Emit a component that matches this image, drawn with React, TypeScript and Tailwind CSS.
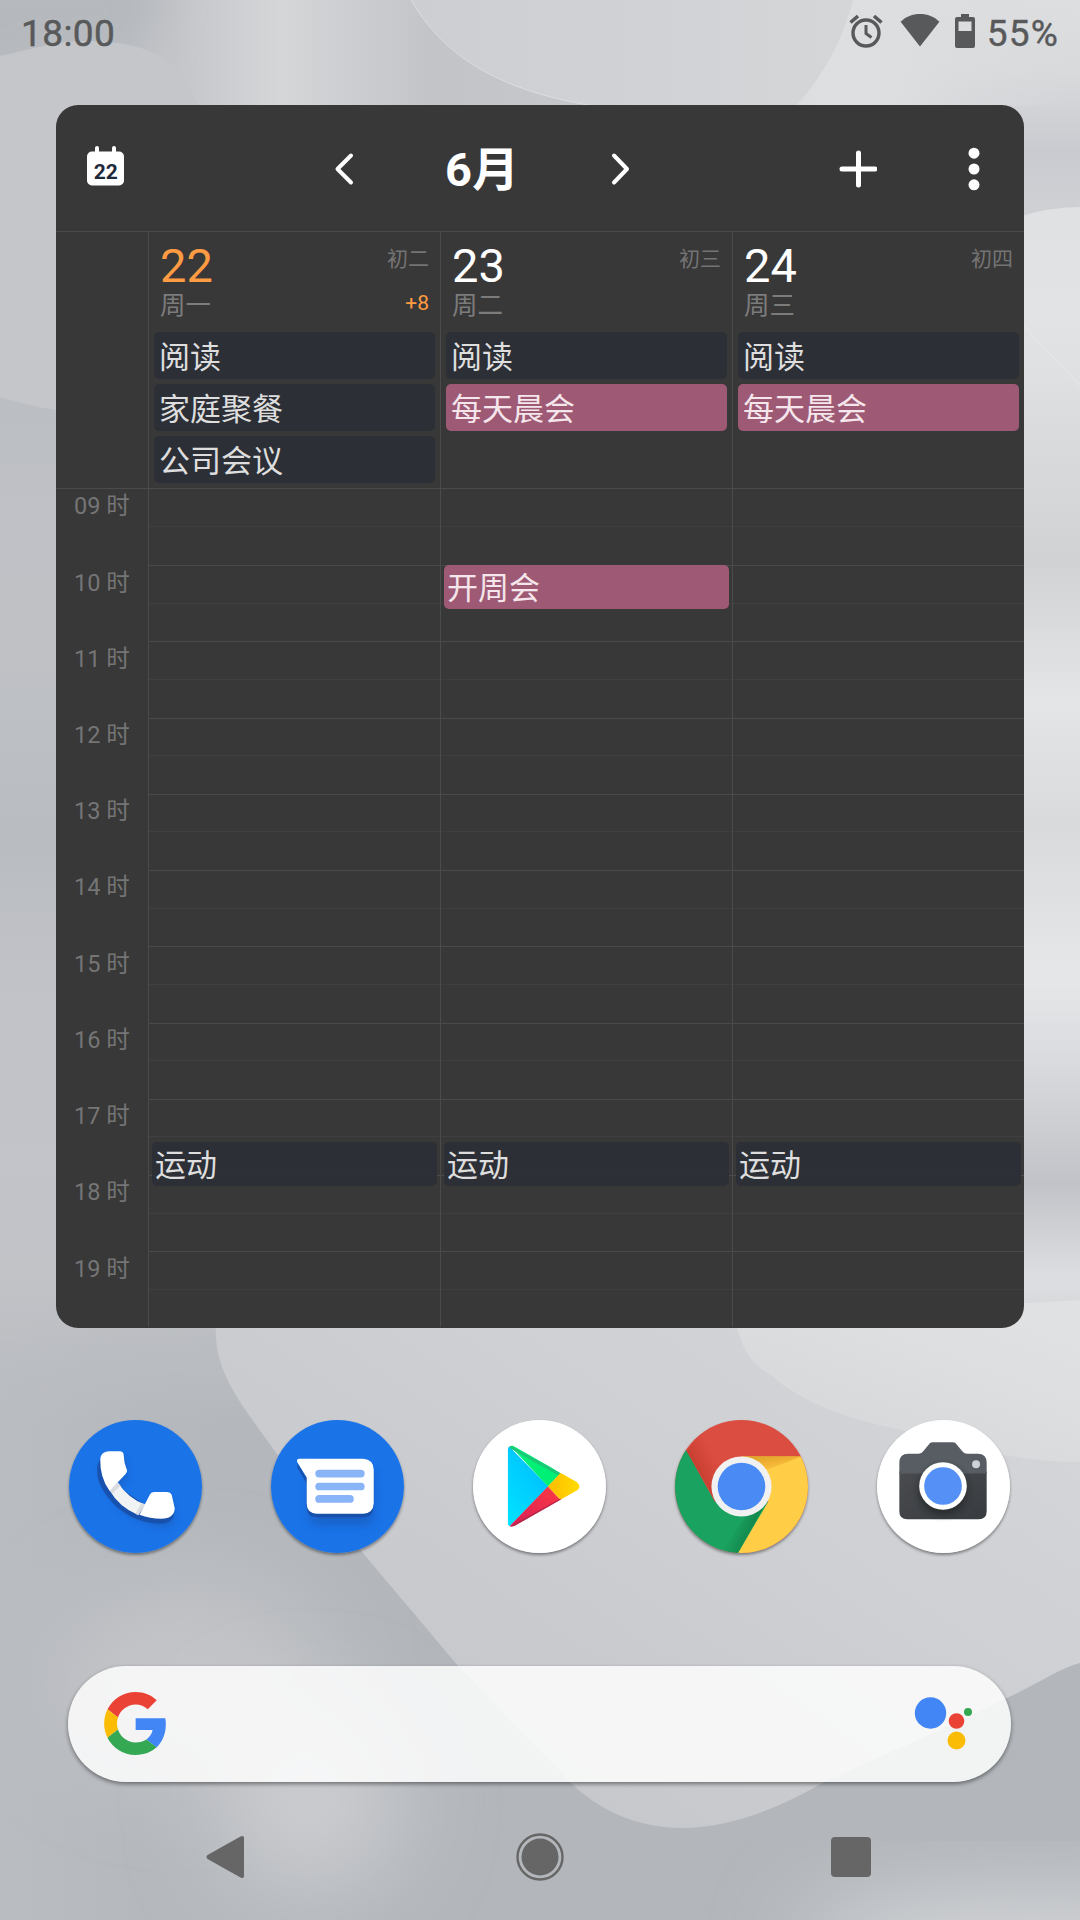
import React from "react";

type AllDayEvent = { title: string; tone: "navy" | "rose" };
type TimedEvent = { title: string; tone: "navy" | "rose"; start: number };
type Day = {
  date: string;
  weekday: string;
  lunar: string;
  extra?: string;
  today?: boolean;
  allDay: AllDayEvent[];
  timed: TimedEvent[];
};

const HOUR_HEIGHT = 76.22;
const FIRST_HOUR = 9;

const days: Day[] = [
  {
    date: "22",
    weekday: "周一",
    lunar: "初二",
    extra: "+8",
    today: true,
    allDay: [
      { title: "阅读", tone: "navy" },
      { title: "家庭聚餐", tone: "navy" },
      { title: "公司会议", tone: "navy" },
    ],
    timed: [{ title: "运动", tone: "navy", start: 17.57 }],
  },
  {
    date: "23",
    weekday: "周二",
    lunar: "初三",
    allDay: [
      { title: "阅读", tone: "navy" },
      { title: "每天晨会", tone: "rose" },
    ],
    timed: [
      { title: "开周会", tone: "rose", start: 10 },
      { title: "运动", tone: "navy", start: 17.57 },
    ],
  },
  {
    date: "24",
    weekday: "周三",
    lunar: "初四",
    allDay: [
      { title: "阅读", tone: "navy" },
      { title: "每天晨会", tone: "rose" },
    ],
    timed: [{ title: "运动", tone: "navy", start: 17.57 }],
  },
];

const hours = ["09", "10", "11", "12", "13", "14", "15", "16", "17", "18", "19"];

const toneClass = {
  navy: "bg-[#2b2e36]/95 text-[#dedede]",
  rose: "bg-[#a05a76]/98 text-[#f5e6ec]",
};

function Wallpaper() {
  return (
    <svg className="absolute inset-0 h-full w-full" viewBox="0 0 1080 1920" preserveAspectRatio="none" aria-hidden="true">
      <defs>
        <linearGradient id="left" gradientUnits="userSpaceOnUse" x1="0" y1="0" x2="0" y2="1450">
          <stop offset="0" stopColor="#c3c4c8" />
          <stop offset="0.28" stopColor="#bbbec3" />
          <stop offset="0.36" stopColor="#bfc1c6" />
          <stop offset="0.44" stopColor="#bfc1c5" />
          <stop offset="0.58" stopColor="#b9bdc2" />
          <stop offset="0.68" stopColor="#c1c2c7" />
          <stop offset="0.8" stopColor="#c3c4c9" />
          <stop offset="0.93" stopColor="#bfc1c5" />
          <stop offset="1" stopColor="#bcbfc3" />
        </linearGradient>
        <linearGradient id="right" gradientUnits="userSpaceOnUse" x1="0" y1="0" x2="0" y2="1400">
          <stop offset="0" stopColor="#dddee0" />
          <stop offset="0.05" stopColor="#d9dadc" />
          <stop offset="0.107" stopColor="#cacbd0" />
          <stop offset="0.15" stopColor="#cfd0d4" />
          <stop offset="0.26" stopColor="#dfe0e2" />
          <stop offset="0.4" stopColor="#d1d2d4" />
          <stop offset="0.5" stopColor="#e4e5e7" />
          <stop offset="0.59" stopColor="#d9dadc" />
          <stop offset="0.7" stopColor="#e6e7e9" />
          <stop offset="0.76" stopColor="#d9dadd" />
          <stop offset="0.845" stopColor="#c2c3c8" />
          <stop offset="0.91" stopColor="#dcdde0" />
          <stop offset="1" stopColor="#dcdddf" />
        </linearGradient>
        <linearGradient id="top" gradientUnits="userSpaceOnUse" x1="0" y1="0" x2="1080" y2="0">
          <stop offset="0" stopColor="#c3c4c9" />
          <stop offset="0.16" stopColor="#c4c5c9" />
          <stop offset="0.26" stopColor="#d5d6d8" />
          <stop offset="0.4" stopColor="#c3c4c8" />
          <stop offset="0.6" stopColor="#c8c9cd" />
          <stop offset="0.76" stopColor="#dedfe1" />
          <stop offset="0.82" stopColor="#dddee0" />
          <stop offset="1" stopColor="#dadbdd" stopOpacity="0" />
        </linearGradient>
        <linearGradient id="topShape" x1="0" y1="0" x2="1" y2="0">
          <stop offset="0" stopColor="#cdced2" />
          <stop offset="1" stopColor="#d5d6d8" />
        </linearGradient>
        <linearGradient id="rightHill" gradientUnits="userSpaceOnUse" x1="0" y1="205" x2="0" y2="400">
          <stop offset="0" stopColor="#dfe1e3" />
          <stop offset="0.6" stopColor="#e2e3e5" />
          <stop offset="1" stopColor="#e2e3e5" stopOpacity="0" />
        </linearGradient>
        <linearGradient id="bottom" gradientUnits="userSpaceOnUse" x1="0" y1="0" x2="400" y2="0">
          <stop offset="0" stopColor="#b9bcc1" />
          <stop offset="0.35" stopColor="#b5b9bd" />
          <stop offset="1" stopColor="#b3b7bb" />
        </linearGradient>
        <linearGradient id="fade" gradientUnits="userSpaceOnUse" x1="0" y1="1290" x2="0" y2="1420">
          <stop offset="0" stopColor="#000" />
          <stop offset="1" stopColor="#fff" />
        </linearGradient>
        <mask id="fadeMask" maskUnits="userSpaceOnUse" x="0" y="1200" width="1080" height="720">
          <rect y="1200" width="1080" height="720" fill="url(#fade)" />
        </mask>
        <linearGradient id="hill" gradientUnits="userSpaceOnUse" x1="900" y1="1330" x2="560" y2="1830">
          <stop offset="0" stopColor="#d4d5d8" />
          <stop offset="0.5" stopColor="#cdced2" />
          <stop offset="1" stopColor="#c6c7cb" />
        </linearGradient>
        <linearGradient id="dome" gradientUnits="userSpaceOnUse" x1="960" y1="1300" x2="900" y2="1460">
          <stop offset="0" stopColor="#e0e1e3" />
          <stop offset="1" stopColor="#d7d8da" />
        </linearGradient>
        <filter id="soft" x="-80%" y="-80%" width="260%" height="260%">
          <feGaussianBlur stdDeviation="45" />
        </filter>
        <filter id="softSmall" x="-50%" y="-50%" width="200%" height="200%">
          <feGaussianBlur stdDeviation="20" />
        </filter>
      </defs>
      <rect width="540" height="1450" fill="url(#left)" />
      <rect x="540" width="540" height="1450" fill="url(#right)" />
      <rect width="1080" height="106" fill="url(#top)" />
      <path d="M-60 -40H170L150 50L110 70Q60 60 36 70Q18 80 -60 116Z" fill="#b5b9be" filter="url(#softSmall)" />
      <path d="M0 56C30 50 50 42 80 41C150 40 185 60 200 112V420C120 420 60 415 0 397Z" fill="#c5c6ca" />
      <path d="M411 0C435 40 480 95 625 110H792C830 70 845 30 853 0Z" fill="url(#topShape)" />
      <path d="M411 0C435 40 480 95 625 110" fill="none" stroke="#dcdde0" strokeWidth="1" />
      <path d="M1000 224Q1040 207 1080 207V400H1000Z" fill="url(#rightHill)" />
      <path d="M1024 326Q1050 355 1080 385" fill="none" stroke="#e9eaec" strokeWidth="1" />
      <rect y="1290" width="1080" height="630" fill="url(#bottom)" mask="url(#fadeMask)" />
      <ellipse cx="190" cy="1680" rx="130" ry="90" fill="#c4c5c9" filter="url(#soft)" />
      <ellipse cx="310" cy="1800" rx="90" ry="90" fill="#cbccd0" filter="url(#soft)" />
      <ellipse cx="1030" cy="1945" rx="230" ry="40" fill="#dcdde0" filter="url(#soft)" />
      <path
        d="M216 1320C213 1370 235 1396 277 1454C300 1482 330 1512 363 1553C398 1595 425 1626 458 1666L569 1781C600 1812 640 1828 682 1828C730 1828 780 1808 826 1781C890 1752 950 1727 1005 1699C1045 1680 1060 1668 1080 1663V1320Z"
        fill="url(#hill)"
      />
      <path d="M735 1320C742 1350 752 1364 771 1375C800 1402 850 1420 902 1430C950 1444 1020 1463 1080 1462V1300Z" fill="url(#dome)" />
    </svg>
  );
}

function StatusBar() {
  return (
    <header className="flex h-[105px] items-start justify-between pl-[21px] pr-[21px] pt-3 text-[#58595a]">
      <span className="text-[37px] leading-[43px] tracking-[0.4px] [-webkit-text-stroke:0.5px_currentColor]">18:00</span>
      <div className="flex items-center">
        <svg className="mb-[6px] h-[36px] w-[36px]" viewBox="0 0 36 36" fill="none" stroke="currentColor" strokeWidth="3.4">
          <circle cx="18" cy="20" r="13" />
          <path d="M18 12v8.500l5.500 4" strokeWidth="3" />
          <path d="M2.500 9.500L10 3M33.500 9.500L26 3" strokeWidth="3.6" />
        </svg>
        <svg className="mb-[7px] ml-[16px] h-[34px] w-[40px]" viewBox="0 0 40 34" fill="currentColor">
          <path d="M20 33.500L.6 8.800C6 3.500 12.500 1 20 1S34 3.500 39.400 8.800Z" />
        </svg>
        <svg className="mb-[6px] ml-[15px] h-[36px] w-[20px]" viewBox="0 0 20 36">
          <path fill="currentColor" fillRule="evenodd" d="M6 1h8v3h4q2 0 2 2v27q0 2-2 2H2q-2 0-2-2V6q0-2 2-2h4zM3.500 8.500v9.500h13V8.500z" />
        </svg>
        <span className="ml-[12px] text-[37px] leading-[43px] tracking-[1.2px] [-webkit-text-stroke:0.4px_currentColor]">55%</span>
      </div>
    </header>
  );
}

function WidgetHeader() {
  return (
    <div className="flex h-[127px] items-center border-b border-[#4b4b4b] text-white">
      <svg className="mb-[4px] ml-[31px] h-[40px] w-[37px]" viewBox="0 0 37 40">
        <path d="M10 2v8M27 2v8" stroke="#fff" strokeWidth="4" strokeLinecap="round" />
        <rect y="5.500" width="37" height="34" rx="5" fill="#fff" />
        <text x="18.700" y="32.500" textAnchor="middle" fontFamily="Roboto" fontWeight="700" fontSize="21" fill="#1e293b">
          22
        </text>
      </svg>
      <svg className="ml-[210px] mt-px h-[34px] w-[20px]" viewBox="0 0 20 34" fill="none" stroke="#fff" strokeWidth="4" strokeLinecap="round" strokeLinejoin="round">
        <path d="M17 3.500L3.500 17L17 30.500" />
      </svg>
      <h1 className="ml-[91px] w-[74px] whitespace-nowrap pt-[2px] text-[47px] font-bold leading-none">6月</h1>
      <svg className="ml-[92px] mt-px h-[34px] w-[20px]" viewBox="0 0 20 34" fill="none" stroke="#fff" strokeWidth="4" strokeLinecap="round" strokeLinejoin="round">
        <path d="M3 3.500L16 17L3 30.500" />
      </svg>
      <svg className="ml-[208px] mt-px h-[38px] w-[38px]" viewBox="0 0 38 38" stroke="#fff" strokeWidth="5" strokeLinecap="round">
        <path d="M19.500 3v32M3 19h33" />
      </svg>
      <svg className="ml-[91px] mt-px h-[44px] w-[12px]" viewBox="0 0 12 44" fill="#fff">
        <circle cx="6" cy="6.200" r="5.500" />
        <circle cx="6" cy="22" r="5.500" />
        <circle cx="6" cy="37.800" r="5.500" />
      </svg>
    </div>
  );
}

function DayHead({ day }: { day: Day }) {
  return (
    <div className="w-[292px] border-l border-[#4b4b4b] px-[5px]">
      <div className="flex h-[100px] justify-between px-[6px]">
        <div className="pt-[11px]">
          <div className={day.today ? "text-[47px] leading-[46px] text-[#ff9b42]" : "text-[47px] leading-[46px] text-white"}>{day.date}</div>
          <div className="text-[25.500px] leading-[32px] text-[#7c7c7c]">{day.weekday}</div>
        </div>
        <div className="flex flex-col items-end pt-[14px]">
          <div className="text-[21px] leading-[26px] text-[#747474]">{day.lunar}</div>
          {day.extra && <div className="mt-[18px] text-[21px] leading-[26px] text-[#ff9b42]">{day.extra}</div>}
        </div>
      </div>
      <div className="flex flex-col gap-[5px]">
        {day.allDay.map((event) => (
          <div key={event.title} className={`flex h-[47px] items-center rounded-[5px] pl-[5px] pt-[3px] text-[31px] leading-none ${toneClass[event.tone]}`}>
            {event.title}
          </div>
        ))}
      </div>
    </div>
  );
}

function DayTrack({ day }: { day: Day }) {
  return (
    <div className="relative w-[292px] border-l border-[#4b4b4b]">
      {hours.map((hour, i) => (
        <div key={hour} className={i === 0 ? "h-[76.22px]" : "h-[76.22px] border-t border-[#4a4a4a]"}>
          <div className="h-1/2 border-b border-[#3f3f3f]" />
        </div>
      ))}
      {day.timed.map((event) => (
        <div
          key={event.title}
          className={`absolute left-[3px] flex h-[44px] w-[285px] items-center rounded-[5px] pl-[3px] pt-[2px] text-[31px] leading-none ${toneClass[event.tone]}`}
          style={{ top: (event.start - FIRST_HOUR) * HOUR_HEIGHT }}
        >
          {event.title}
        </div>
      ))}
    </div>
  );
}

function CalendarWidget() {
  return (
    <section className="mx-[56px] h-[1223px] overflow-hidden rounded-[22px] bg-[#383838]">
      <WidgetHeader />
      <div className="flex h-[257px] border-b border-[#4b4b4b]">
        <div className="w-[92px]" />
        {days.map((day) => (
          <DayHead key={day.date} day={day} />
        ))}
      </div>
      <div className="flex">
        <div className="w-[92px]">
          {hours.map((hour) => (
            <div key={hour} className="h-[76.22px] whitespace-nowrap pl-[18px] pt-[2.4px] text-[23.500px] leading-[30px] text-[#757575]">
              {hour} 时
            </div>
          ))}
        </div>
        {days.map((day) => (
          <DayTrack key={day.date} day={day} />
        ))}
      </div>
    </section>
  );
}

function PhoneIcon() {
  return (
    <svg className="h-full w-full" viewBox="0 0 134 134">
      <defs>
        <filter id="phoneShade" x="-30%" y="-30%" width="160%" height="160%">
          <feGaussianBlur stdDeviation="4" />
        </filter>
      </defs>
      <circle cx="67" cy="67" r="67" fill="#1b73e8" />
      <path d="M32 44C32 82 66 108 98 108Q107 107 107 96L104 80H86L76 90Q60 84 50 70L60 56L56 36H42Q34 36 32 44Z" fill="#1657b4" opacity="0.5" filter="url(#phoneShade)" />
      <path d="M31 40Q26 48 30 62C40 86 62 104 94 104.500Q106 103 106 92L80 88L45 64Z" fill="#174ea6" opacity="0.85" />
      <path d="M49 63Q60 79 76 85L69 95.500Q50 87 41 71Z" fill="#f1f2f4" />
      <path d="M49 63L52 66L44 74L41 71ZM73 84L77 85L70 96L67 94.500Z" fill="#dadce0" />
      <path d="M31.500 39.500Q32 32 40 31.500H51Q54.500 31.500 55 34.500L56 43L58.500 51Q58.500 53 57 54.500L41 71.500Q31 58 31.500 39.500Z" fill="#fff" />
      <path d="M71 95.500L81.500 75Q83 72.500 86 72.500H98Q102.500 72.500 103.500 75.500L106.500 89Q106 99.500 93 99.500Q82 99.500 71 95.500Z" fill="#fff" />
    </svg>
  );
}

function MessagesIcon() {
  return (
    <svg className="h-full w-full" viewBox="0 0 134 134">
      <defs>
        <filter id="msgShade" x="-30%" y="-30%" width="160%" height="160%">
          <feGaussianBlur stdDeviation="5" />
        </filter>
      </defs>
      <circle cx="67" cy="67" r="67" fill="#1b73e8" />
      <rect x="38" y="48" width="66" height="58" rx="10" fill="#1657b4" opacity="0.6" filter="url(#msgShade)" />
      <path d="M26.500 43V48L36 64V88Q36 98 46 98H93Q103 98 103 88V82H50Z" fill="#174ea6" opacity="0.85" />
      <path d="M28 39H93Q103.500 40 103.500 50V84Q103 94 93 94.500H46Q36 94 36 84V58L26.500 42.500Q25.500 39.500 28 39Z" fill="#fff" />
      <path d="M48.500 54H90.500M48.500 67H90.500M48.500 79.500H79.500" stroke="#8ab4f8" strokeWidth="7.800" strokeLinecap="round" />
    </svg>
  );
}

function PlayIcon() {
  return (
    <svg className="h-full w-full" viewBox="0 0 134 134">
      <defs>
        <linearGradient id="playBlue" x1="1" y1="0" x2="0.300" y2="1">
          <stop offset="0" stopColor="#00b4ff" />
          <stop offset="1" stopColor="#00e3ff" />
        </linearGradient>
        <linearGradient id="playYellow" x1="1" y1="0" x2="0" y2="0">
          <stop offset="0" stopColor="#ffe000" />
          <stop offset="1" stopColor="#ffbd00" />
        </linearGradient>
        <linearGradient id="playRed" x1="1" y1="0" x2="0" y2="1">
          <stop offset="0" stopColor="#ff3a44" />
          <stop offset="1" stopColor="#d01a58" />
        </linearGradient>
        <clipPath id="playClip">
          <path d="M35 30Q35.500 25.500 40 26L43 27.500L104.500 62.500Q110 67 104.500 71L42 106.500Q36 109 35 104Z" />
        </clipPath>
      </defs>
      <circle cx="67" cy="67" r="67" fill="#fff" />
      <g clipPath="url(#playClip)">
        <path d="M30 20V114L76 67Z" fill="url(#playBlue)" />
        <path d="M32 20L75.500 67L88 54L44 22Z" fill="#00f076" />
        <path d="M35 24L89 54L87 56.500L38 29Z" fill="#1cc878" />
        <path d="M75.500 67L88 53.500L112 60V74L88 80.500Z" fill="url(#playYellow)" />
        <path d="M32 112L75.500 67L88 80.500L44 112Z" fill="url(#playRed)" />
        <path d="M36 108L88 79L89 81.500L40 110Z" fill="#b5294a" />
      </g>
    </svg>
  );
}

function ChromeIcon() {
  return (
    <svg className="h-full w-full" viewBox="0 0 134 134">
      <defs>
        <clipPath id="chromeClip">
          <circle cx="67" cy="67" r="67" />
        </clipPath>
        <linearGradient id="redShade" gradientUnits="userSpaceOnUse" x1="18" y1="48" x2="40" y2="36">
          <stop offset="0" stopColor="#a52714" stopOpacity="0.400" />
          <stop offset="1" stopColor="#a52714" stopOpacity="0" />
        </linearGradient>
        <linearGradient id="greenShade" gradientUnits="userSpaceOnUse" x1="78" y1="112" x2="60" y2="104">
          <stop offset="0" stopColor="#055524" stopOpacity="0.350" />
          <stop offset="1" stopColor="#055524" stopOpacity="0" />
        </linearGradient>
        <linearGradient id="yellowShade" gradientUnits="userSpaceOnUse" x1="100" y1="36" x2="103" y2="54">
          <stop offset="0" stopColor="#bf7a10" stopOpacity="0.450" />
          <stop offset="1" stopColor="#ea6100" stopOpacity="0" />
        </linearGradient>
      </defs>
      <g clipPath="url(#chromeClip)">
        <rect width="134" height="134" fill="#dc4d41" />
        <path d="M11.500 31L40 82L94 82L63.500 140H-10V20Z" fill="#1aa260" />
        <path d="M67 36.500H140V140H62L63.500 134L94 82Z" fill="#ffcd46" />
        <path d="M11.500 31L40 80L45 50L30 8Z" fill="url(#redShade)" />
        <path d="M63.500 134L90 86L72 96L46 134Z" fill="url(#greenShade)" />
        <path d="M67 36.500H128L88 52Z" fill="url(#yellowShade)" />
        <circle cx="67" cy="67" r="30.300" fill="#f1f1f1" />
        <circle cx="67" cy="67" r="24" fill="#4a8af4" />
      </g>
    </svg>
  );
}

function CameraIcon() {
  return (
    <svg className="h-full w-full" viewBox="0 0 134 134">
      <defs>
        <linearGradient id="camBody" x1="0" y1="0" x2="1" y2="1">
          <stop offset="0" stopColor="#494b4f" />
          <stop offset="1" stopColor="#383b3f" />
        </linearGradient>
        <filter id="lensShade" x="-30%" y="-30%" width="160%" height="160%">
          <feGaussianBlur stdDeviation="3" />
        </filter>
      </defs>
      <circle cx="67" cy="67" r="67" fill="#fff" />
      <path d="M22.500 52H110.500V92Q110.500 100 102.500 100H30.500Q22.500 100 22.500 92Z" fill="url(#camBody)" />
      <path d="M22.500 54V43Q22.500 34 31.500 34H42Q45 34 47 31L52 25Q53.500 22.500 56 22.500H76.500Q79 22.500 80.500 25L85.500 31Q87.500 34 90.500 34H101.500Q110.500 34 110.500 43V54Z" fill="#585d63" />
      <circle cx="66.500" cy="71" r="25" fill="#1f2124" opacity="0.600" filter="url(#lensShade)" />
      <circle cx="66.500" cy="66.500" r="24" fill="#fff" />
      <circle cx="66.500" cy="66.500" r="19" fill="#5490f5" />
      <circle cx="99.800" cy="44.500" r="4" fill="#cfd1d4" />
    </svg>
  );
}

function Dock() {
  const apps = [
    { name: "phone", icon: <PhoneIcon /> },
    { name: "messages", icon: <MessagesIcon /> },
    { name: "play", icon: <PlayIcon /> },
    { name: "chrome", icon: <ChromeIcon /> },
    { name: "camera", icon: <CameraIcon /> },
  ];
  return (
    <nav className="mt-[92px] flex justify-between pl-[69px] pr-[70px]">
      {apps.map((app) => (
        <div key={app.name} className="h-[133px] w-[133px] rounded-full shadow-[0_2px_3px_rgba(0,0,0,0.4)]">
          {app.icon}
        </div>
      ))}
    </nav>
  );
}

function SearchBar() {
  return (
    <div className="ml-[68px] mr-[69px] mt-[113px] flex h-[116px] items-center justify-between rounded-full bg-white/83 pl-[36px] pr-[39px] shadow-[0_2px_4px_rgba(0,0,0,0.45)]">
      <svg className="mb-px h-[63px] w-[62px]" viewBox="0 0 47 48">
        <path fill="#EA4335" d="M24 9.500c3.540 0 6.710 1.220 9.210 3.600l6.850-6.850C35.900 2.380 30.470 0 24 0 14.620 0 6.510 5.380 2.560 13.220l7.980 6.190C12.430 13.720 17.740 9.500 24 9.500z" />
        <path fill="#4285F4" d="M46.980 24.550c0-1.570-.15-3.090-.38-4.550H24v9.020h12.940c-.58 2.960-2.260 5.480-4.780 7.180l7.730 6c4.510-4.180 7.090-10.360 7.090-17.650z" />
        <path fill="#FBBC05" d="M10.530 28.590c-.48-1.450-.76-2.990-.76-4.590s.27-3.140.76-4.590l-7.980-6.190C.92 16.460 0 20.120 0 24c0 3.880.92 7.540 2.560 10.780l7.970-6.190z" />
        <path fill="#34A853" d="M24 48c6.480 0 11.930-2.130 15.890-5.810l-7.730-6c-2.150 1.450-4.920 2.300-8.160 2.300-6.260 0-11.570-4.220-13.470-9.910l-7.980 6.190C6.510 42.620 14.620 48 24 48z" />
      </svg>
      <svg className="mb-[1px] h-[58px] w-[58px]" viewBox="0 0 58 58">
        <circle cx="16.500" cy="18" r="15.700" fill="#4285f4" />
        <circle cx="42.500" cy="26" r="7.800" fill="#ea4335" />
        <circle cx="42.500" cy="45.500" r="9" fill="#fbbc05" />
        <circle cx="54" cy="17" r="4" fill="#34a853" />
      </svg>
    </div>
  );
}

function NavigationBar() {
  return (
    <div className="mt-[51px] flex items-center justify-between pl-[206px] pr-[209px] text-[#666]">
      <svg className="h-[48px] w-[39px]" viewBox="0 0 39 48" fill="currentColor">
        <path d="M1.500 22L34.500 3.500Q38 2 38 5V43Q38 46 34.500 44.500L1.500 26Q-.5 24 1.500 22Z" />
      </svg>
      <svg className="ml-[4px] h-[48px] w-[48px]" viewBox="0 0 48 48">
        <circle cx="24" cy="24" r="22.500" fill="none" stroke="currentColor" strokeWidth="2.400" />
        <circle cx="24" cy="24" r="18.500" fill="currentColor" />
      </svg>
      <div className="h-[40px] w-[40px] rounded-[4px] bg-[#666]" />
    </div>
  );
}

export default function App() {
  return (
    <main className="relative h-[1920px] w-[1080px] overflow-hidden bg-[#c3c4c8] font-[Roboto,'Noto_Sans_CJK_SC',sans-serif]" lang="zh-CN">
      <Wallpaper />
      <div className="relative">
        <StatusBar />
        <CalendarWidget />
        <Dock />
        <SearchBar />
        <NavigationBar />
      </div>
    </main>
  );
}
